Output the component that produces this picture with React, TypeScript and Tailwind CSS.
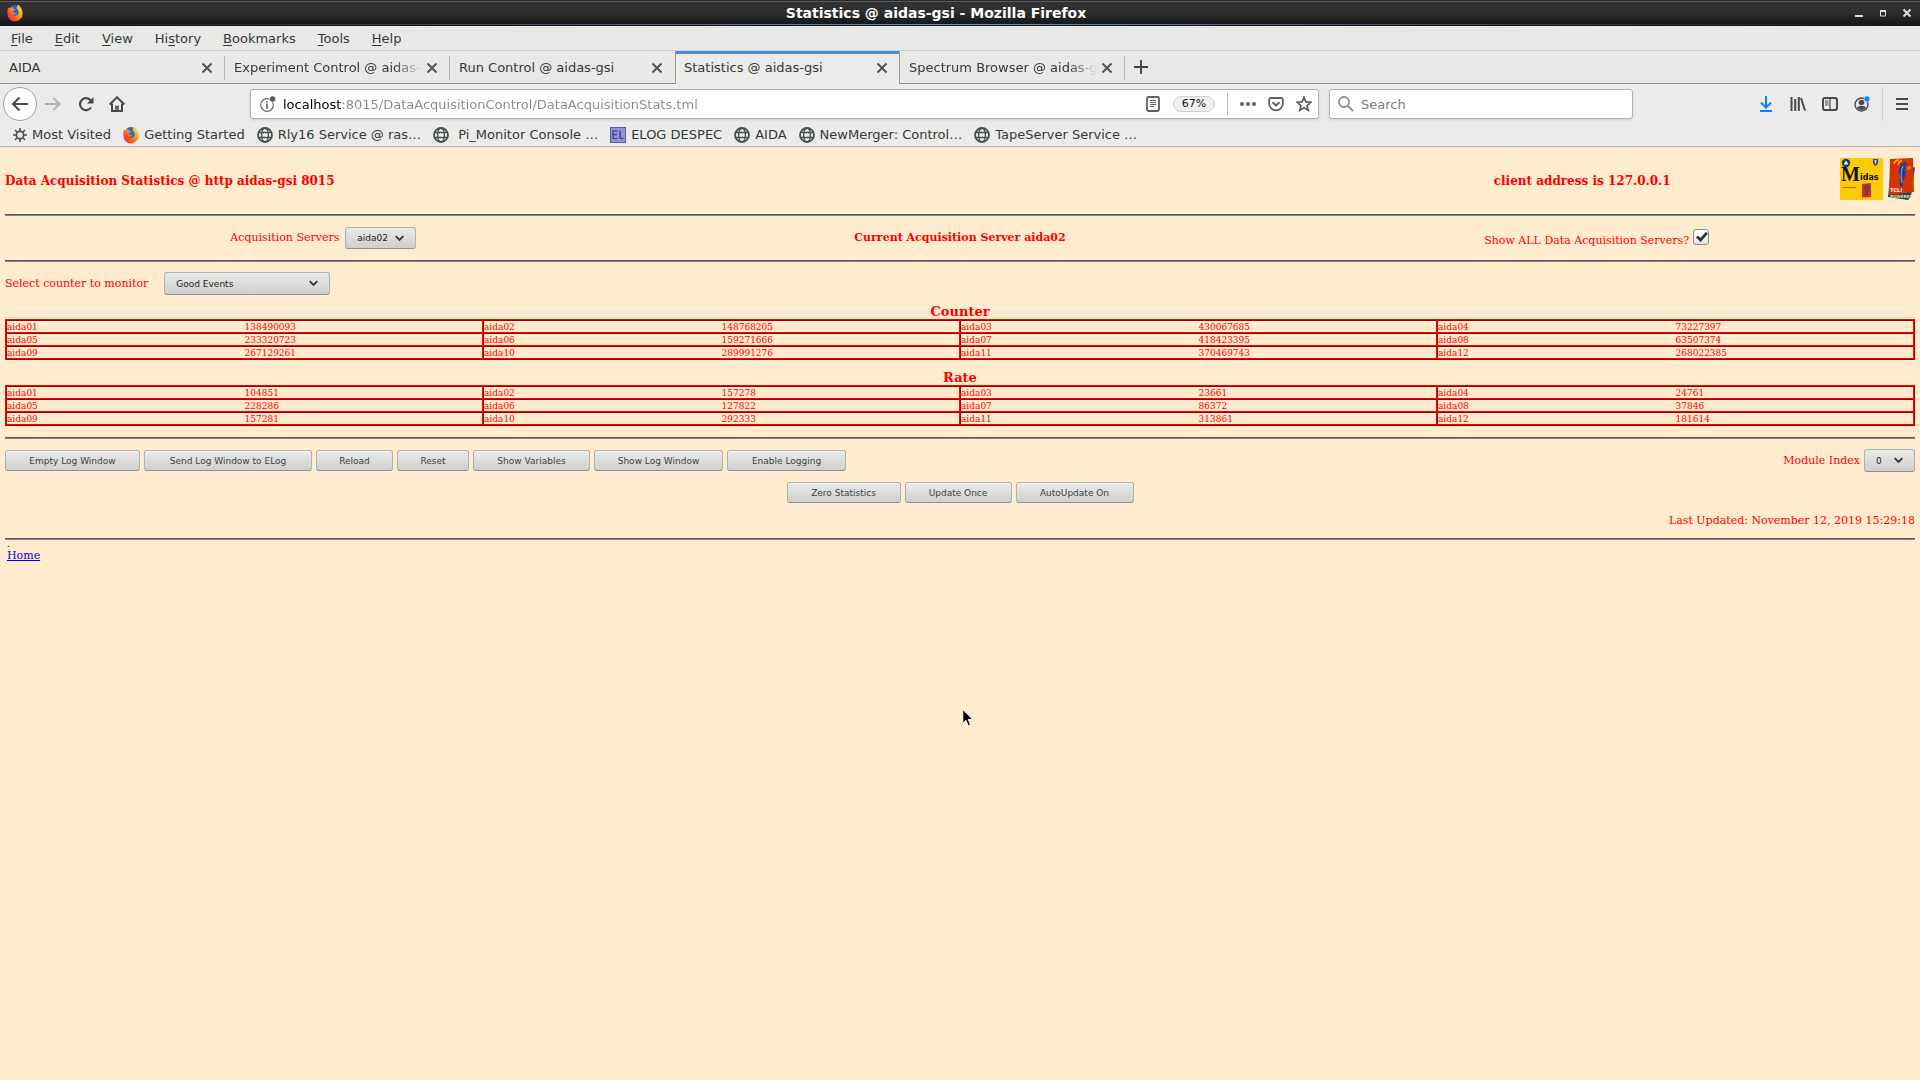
import type { ReactNode } from 'react'

const menus = [
  ['', 'F', 'ile'],
  ['', 'E', 'dit'],
  ['', 'V', 'iew'],
  ['Hi', 's', 'tory'],
  ['', 'B', 'ookmarks'],
  ['', 'T', 'ools'],
  ['', 'H', 'elp'],
]

const tabs = [
  'AIDA',
  'Experiment Control @ aidas-gsi',
  'Run Control @ aidas-gsi',
  'Statistics @ aidas-gsi',
  'Spectrum Browser @ aidas-gsi',
]
const activeTab = 3

const counters = [
  ['138490093', '148768205', '430067685', '73227397'],
  ['233320723', '159271666', '418423395', '63507374'],
  ['267129261', '289991276', '370469743', '268022385'],
]

const rates = [
  ['104851', '157278', '23661', '24761'],
  ['228286', '127822', '86372', '37846'],
  ['157281', '292333', '313861', '181614'],
]

function FirefoxIcon() {
  return (
    <svg width="16" height="18" viewBox="0 0 16 18">
      <defs>
        <linearGradient id="fox" x1="1" y1="0" x2="0" y2="1">
          <stop offset="0" stopColor="#fff04a" />
          <stop offset="0.35" stopColor="#ffb01f" />
          <stop offset="0.65" stopColor="#ff5a1f" />
          <stop offset="1" stopColor="#e01a5a" />
        </linearGradient>
      </defs>
      <circle cx="8" cy="7.5" r="6.5" fill="#1b6fc8" />
      <path
        d="M1.2 3.5 2.6 4.6C3.4 3.4 4.6 3 5.4 3.2 5.2 4.4 6.6 5 8 5.2 7.6 6.6 6 6.6 5.6 7.6 6.4 9 8 9.4 9.4 9 8.8 10.8 6.6 11 5.2 10.4 6.4 12.4 10.6 12.4 11.6 9.4 12.2 7 10.6 5 9.4 4.2 10 2.6 11.2 1 12 .6 12 2.2 15.6 4.6 15.6 9.4A7.6 8 0 0 1 8 17.4 7.6 8 0 0 1 .4 9.6C.3 7.4.5 5.2 1.2 3.5Z"
        fill="url(#fox)"
      />
    </svg>
  )
}

function GlobeIcon() {
  return (
    <svg width="16" height="16" viewBox="0 0 16 16" fill="none" stroke="#4a4f51">
      <circle cx="8" cy="8" r="7" strokeWidth="1.8" />
      <ellipse cx="8" cy="8" rx="3.4" ry="7" strokeWidth="1.3" />
      <path d="M1 5.5h14M1 10.5h14" strokeWidth="1.3" />
    </svg>
  )
}

function GearIcon() {
  return (
    <svg width="14" height="14" viewBox="0 0 14 14" fill="none" stroke="#4a4f51">
      <circle cx="7" cy="7" r="3.7" strokeWidth="1.7" />
      <path
        d="M7 0v3M7 11v3M0 7h3M11 7h3M2 2l2 2M10 10l2 2M12 2l-2 2M4 10l-2 2"
        strokeWidth="1.6"
      />
    </svg>
  )
}

function ElogIcon() {
  return (
    <svg width="16" height="16" viewBox="0 0 16 16">
      <rect width="16" height="16" fill="#5a5fa8" />
      <rect x="1" y="1" width="14" height="14" fill="#9195d6" />
      <path
        d="M7.5 4H3v7.5h4.500M3 7.700h4M10 3.500v8h3.500"
        fill="none"
        stroke="#34377f"
        strokeWidth="1.2"
      />
    </svg>
  )
}

function CloseIcon() {
  return (
    <svg width="12" height="12" viewBox="0 0 12 12" stroke="#4a4f51" strokeWidth="1.8">
      <path d="M1.5 1.5l9 9M10.5 1.5l-9 9" />
    </svg>
  )
}

const bookmarks: { label: string; icon: ReactNode }[] = [
  { label: 'Most Visited', icon: <GearIcon /> },
  { label: 'Getting Started', icon: <FirefoxIcon /> },
  { label: 'Rly16 Service @ ras…', icon: <GlobeIcon /> },
  { label: '\u00a0Pi_Monitor Console …', icon: <GlobeIcon /> },
  { label: 'ELOG DESPEC', icon: <ElogIcon /> },
  { label: 'AIDA', icon: <GlobeIcon /> },
  { label: 'NewMerger: Control…', icon: <GlobeIcon /> },
  { label: 'TapeServer Service …', icon: <GlobeIcon /> },
]

function TitleBar() {
  return (
    <header className="h-[26px] flex flex-col bg-[#141414]">
      <div className="h-px bg-[#2a2a2a]" />
      <div className="h-px bg-[#5c5c5c]" />
      <div className="flex-1 grid grid-cols-[1fr_auto_1fr] items-center bg-linear-to-b from-[#333333] via-[#2d2d2d] to-[#181818] px-[7px]">
        <FirefoxIcon />
        <h1 className="mr-12 text-sm leading-[18px] font-bold text-white">
          Statistics @ aidas-gsi - Mozilla Firefox
        </h1>
        <div className="flex justify-end gap-3">
          <button aria-label="Minimize">
            <svg width="12" height="12" viewBox="0 0 12 12" fill="#dcdcdc">
              <path d="M2 8h8v2H2z" />
            </svg>
          </button>
          <button aria-label="Maximize">
            <svg width="12" height="12" viewBox="0 0 12 12" fill="none" stroke="#dcdcdc">
              <path d="M3.5 4h5v5h-5z" />
              <path d="M3 4h6" strokeWidth="2" />
            </svg>
          </button>
          <button aria-label="Close">
            <svg width="12" height="12" viewBox="0 0 12 12" stroke="#dcdcdc" strokeWidth="2">
              <path d="M2.5 2.5l7 7M9.5 2.5l-7 7" />
            </svg>
          </button>
        </div>
      </div>
      <div className="h-px bg-linear-to-r from-[#141414] via-[#6d93c4] to-[#141414]" />
      <div className="h-px bg-[#101418]" />
    </header>
  )
}

function MenuBar() {
  return (
    <nav className="h-[25px] flex items-center border-b border-[#cfcfcd] bg-[#e8e8e6] pt-[2px]">
      {menus.map(([before, key, after]) => (
        <button key={before + key + after} className="px-[11px]">
          {before}
          <span className="underline underline-offset-2">{key}</span>
          {after}
        </button>
      ))}
    </nav>
  )
}

function TabBar() {
  return (
    <div className="h-[33px] flex bg-[#e8e8e6]">
      {tabs.map((tab, i) => (
        <div
          key={tab}
          className={
            i === activeTab
              ? 'w-[225px] flex items-center border-x border-[#9a9a98] bg-[#ebebe9] shadow-[inset_0_3px_0_#4a90d9] pl-2 pr-[11px]'
              : 'w-[225px] flex items-center border-b border-[#8e8e8c] pt-px pl-[9px]'
          }
        >
          <button
            className={
              tab.length > 25
                ? 'w-[188px] overflow-hidden whitespace-nowrap text-left mask-r-from-85% mask-r-to-100%'
                : 'w-[188px] overflow-hidden whitespace-nowrap text-left'
            }
          >
            {tab}
          </button>
          <button aria-label={`Close ${tab}`} className="ml-1">
            <CloseIcon />
          </button>
          {i !== activeTab && i !== activeTab - 1 && (
            <span className="ml-auto h-6 w-px bg-[#b4b4b2]" />
          )}
        </div>
      ))}
      <div className="flex-1 flex items-center border-b border-[#8e8e8c] pl-[9px]">
        <button aria-label="New tab">
          <svg width="14" height="14" viewBox="0 0 14 14" stroke="#3f4446" strokeWidth="1.8">
            <path d="M7 0v14M0 7h14" />
          </svg>
        </button>
      </div>
    </div>
  )
}

function NavBar() {
  return (
    <div className="h-10 flex items-center pl-[3px] pr-3">
      <button
        aria-label="Back"
        className="size-[34px] flex items-center justify-center rounded-full border border-[#a6a6a4] bg-[#fcfcfc]"
      >
        <svg width="18" height="16" viewBox="0 0 18 16" fill="none" stroke="#454a4c" strokeWidth="2">
          <path d="M17 8H2M8.5 1.5 2 8l6.5 6.5" />
        </svg>
      </button>
      <button aria-label="Forward" className="ml-2">
        <svg width="16" height="14" viewBox="0 0 16 14" fill="none" stroke="#aeb0b0" strokeWidth="2">
          <path d="M0 7h14M8.5 1 14.5 7l-6 6" />
        </svg>
      </button>
      <button aria-label="Reload" className="ml-[17px]">
        <svg width="16" height="16" viewBox="0 0 16 16" fill="none" stroke="#454a4c" strokeWidth="2.2">
          <path d="M13 11.5A6 6 0 1 1 12.6 4.2" />
          <path d="M15.5 1v6.5H9z" fill="#454a4c" stroke="none" />
        </svg>
      </button>
      <button aria-label="Home" className="ml-[15px]">
        <svg width="16" height="16" viewBox="0 0 16 16" fill="none" stroke="#454a4c" strokeWidth="2">
          <path d="M.7 8.5 8 1.3l7.3 7.2" />
          <path d="M3 7.5V15h10V7.5" />
          <path d="M7 15v-4.5h2V15" strokeWidth="1.5" />
        </svg>
      </button>

      <div className="ml-[125px] flex-1 h-[30px] flex items-center rounded-[3px] border border-[#b2b2b0] bg-white pl-[9px] pr-[6px] shadow-sm">
        <svg width="16" height="16" viewBox="0 0 16 16" fill="none" stroke="#6b6b6b">
          <circle cx="7" cy="9" r="6.3" strokeWidth="1.2" />
          <path d="M7 7.5V13M7 5v1.5" strokeWidth="1.7" />
          <circle cx="12.5" cy="3" r="3.2" fill="#5a5a5a" stroke="#fff" strokeWidth=".8" />
        </svg>
        <input
          aria-label="Address"
          className="ml-[7px] flex-1 bg-[linear-gradient(90deg,#000_59px,#8a8a8a_59px)] bg-clip-text pt-px text-transparent outline-none"
          defaultValue="localhost:8015/DataAcquisitionControl/DataAcquisitionStats.tml"
        />
        <svg width="14" height="16" viewBox="0 0 14 16" fill="none" stroke="#5f5f5f">
          <rect x="1" y="1" width="12" height="14" rx="1.5" strokeWidth="1.8" />
          <path d="M4 4.5h6M4 6.5h6M4 8.5h6M4 10.5h4" />
        </svg>
        <button className="ml-[13px] h-4 w-[42px] rounded-full border border-[#cfcfcf] bg-[#efefef] text-[11px] leading-[14px] text-[#111]">
          67%
        </button>
        <span className="ml-3 h-[22px] w-px bg-[#bdbdbd]" />
        <button aria-label="Page actions" className="ml-3">
          <svg width="16" height="4" viewBox="0 0 16 4" fill="#5f5f5f">
            <circle cx="2" cy="2" r="2" />
            <circle cx="8" cy="2" r="2" />
            <circle cx="14" cy="2" r="2" />
          </svg>
        </button>
        <button aria-label="Save to Pocket" className="ml-3">
          <svg width="16" height="16" viewBox="0 0 16 16" fill="none" stroke="#5f5f5f" strokeWidth="1.8">
            <path d="M2.5 2h11a1.3 1.3 0 0 1 1.3 1.3V7.5A6.8 6.8 0 0 1 1.2 7.5V3.3A1.3 1.3 0 0 1 2.5 2Z" />
            <path d="M4.5 6.2 8 9.5l3.5-3.3" strokeWidth="2" />
          </svg>
        </button>
        <button aria-label="Bookmark this page" className="ml-3">
          <svg width="16" height="16" viewBox="0 0 16 16" fill="none" stroke="#5f5f5f" strokeWidth="1.8">
            <path d="M8 1.5 9.9 5.9l4.8.4-3.6 3.2 1 4.8L8 11.800l-4.100 2.500 1-4.800L1.300 6.300l4.800-.4Z" />
          </svg>
        </button>
      </div>

      <div className="ml-[10px] w-[304px] h-[30px] flex items-center rounded-[3px] border border-[#b2b2b0] bg-white pl-2 shadow-sm">
        <svg width="16" height="16" viewBox="0 0 16 16" fill="none" stroke="#8f8f8f">
          <circle cx="6" cy="6" r="5" strokeWidth="1.8" />
          <path d="M9.5 9.5 15 15" strokeWidth="2" />
        </svg>
        <input
          aria-label="Search"
          placeholder="Search"
          className="ml-[7px] flex-1 pt-px outline-none placeholder:text-[#7b7b7b]"
        />
      </div>

      <div className="ml-[125px] flex items-center gap-4">
        <button aria-label="Downloads">
          <svg width="16" height="16" viewBox="0 0 16 16" fill="none" stroke="#0a84ff" strokeWidth="2">
            <path d="M8 0v11M3 6.5l5 5 5-5M2 15h12" />
          </svg>
        </button>
        <button aria-label="Library">
          <svg width="16" height="16" viewBox="0 0 16 16" fill="none" stroke="#454a4c" strokeWidth="2">
            <path d="M1.5 1v14M5.2 3v12M8.8 1v14M11 2l4 12.5" />
          </svg>
        </button>
        <button aria-label="Sidebars">
          <svg width="16" height="16" viewBox="0 0 16 16" fill="none" stroke="#454a4c">
            <rect x="1" y="2" width="14" height="12" rx="2" strokeWidth="2" />
            <path d="M8 2v12M3 5h3.5M3 7h3.5M3 9h3.5" strokeWidth="1.2" />
          </svg>
        </button>
        <button aria-label="Account">
          <svg width="16" height="16" viewBox="0 0 16 16">
            <circle cx="7.5" cy="8.5" r="6.5" fill="none" stroke="#454a4c" strokeWidth="1.4" />
            <circle cx="7.5" cy="6.5" r="2.8" fill="#454a4c" />
            <path d="M3 12c1-2 2.500-2 4.500-2s3.500 0 4.500 2c-2.500 2.500-6.500 2.500-9 0Z" fill="#454a4c" />
            <circle cx="13" cy="3" r="3" fill="#0a84ff" stroke="#ebebe9" strokeWidth=".6" />
          </svg>
        </button>
      </div>
      <span className="ml-3 h-[34px] w-px bg-[#d0d0ce]" />
      <button aria-label="Open menu" className="ml-[13px]">
        <svg width="12" height="14" viewBox="0 0 12 14" stroke="#454a4c" strokeWidth="2">
          <path d="M0 2h12M0 7h12M0 12h12" />
        </svg>
      </button>
    </div>
  )
}

function BookmarksBar() {
  return (
    <div className="h-[23px] flex items-center gap-3 border-b border-[#b4b4b2] pl-[13px]">
      {bookmarks.map((b) => (
        <a key={b.label} href="#" className="flex items-center gap-[5px] whitespace-nowrap">
          {b.icon}
          {b.label}
        </a>
      ))}
    </div>
  )
}

function Rule() {
  return <hr className="h-[2px] border-0 border-t border-[#555555] bg-[#85858a]" />
}

type SelectProps = {
  id: string
  className: string
  options: string[]
}

function Select({ id, className, options }: SelectProps) {
  return (
    <span className={`relative inline-block ${className}`}>
      <select
        id={id}
        className="block h-full w-full appearance-none rounded-[3px] border border-[#b0b0ae] border-b-[#8e8e8c] bg-linear-to-b from-[#e9e9e8] to-[#cfcfcd] pl-[11px] font-[DejaVu_Sans,sans-serif] text-[9px] text-[#222]"
      >
        {options.map((o) => (
          <option key={o}>{o}</option>
        ))}
      </select>
      <svg
        className="pointer-events-none absolute right-3 top-2"
        width="9"
        height="7"
        viewBox="0 0 9 7"
        fill="none"
        stroke="#333"
        strokeWidth="1.8"
      >
        <path d="M.7 1.2 4.5 5 8.3 1.2" />
      </svg>
    </span>
  )
}

function Button({ className, children }: { className: string; children: ReactNode }) {
  return (
    <button
      className={`h-[21px] rounded-[3px] border border-[#b0b0ae] border-b-[#8e8e8c] bg-linear-to-b from-[#ebebea] to-[#cfcfcd] font-[DejaVu_Sans,sans-serif] text-[9px] text-[#3c4143] shadow-[inset_0_1px_0_#f8f8f8] ${className}`}
    >
      {children}
    </button>
  )
}

function StatsTable({ title, rows }: { title: string; rows: string[][] }) {
  return (
    <section>
      <h2 className="text-center text-[13px] leading-[15px] font-bold">{title}</h2>
      <table
        aria-label={title}
        className="w-full table-fixed border-separate border-spacing-0 border border-[#ff0000] border-r-[#b00000] border-b-[#990000] text-[9px] leading-[10px]"
      >
        <tbody>
          {rows.map((row, r) => (
            <tr key={r}>
              {row.map((value, c) => [
                <td
                  key={`n${c}`}
                  className="border-y border-l border-t-[#990000] border-b-[#ff0000] border-l-[#b00000] p-0 pt-px"
                >
                  aida{String(r * 4 + c + 1).padStart(2, '0')}
                </td>,
                <td
                  key={`v${c}`}
                  className="border-y border-r border-t-[#990000] border-b-[#ff0000] border-r-[#ff0000] p-0 pt-px"
                >
                  {value}
                </td>,
              ])}
            </tr>
          ))}
        </tbody>
      </table>
    </section>
  )
}

function Logos() {
  return (
    <div className="flex gap-1">
      <svg width="44" height="42" viewBox="0 0 44 42">
        <rect width="43" height="42" fill="#fccb05" />
        <circle cx="6" cy="5" r="4.2" fill="#123a70" />
        <path d="M3.5 6.5 6 2.5l2.5 4z" fill="#fff" />
        <path d="M33 1h5v4q-1 3-2.5 3T33 5z" fill="#28539b" />
        <path d="M34 3h3M35.5 2v4" stroke="#dfe7f5" strokeWidth=".8" />
        <text x="1" y="23" fontFamily="Liberation Serif, serif" fontWeight="bold" fontSize="20" fill="#111">
          M
        </text>
        <text x="20" y="22" fontFamily="DejaVu Sans, sans-serif" fontWeight="bold" fontSize="8" fill="#111">
          idas
        </text>
        <text x="3" y="30" fontFamily="DejaVu Sans, sans-serif" fontWeight="bold" fontSize="2" fill="#333">
          powered by
        </text>
        <path d="M22 26l9-1v14l-9 .5z" fill="#d33208" />
        <path d="M27 27q-3 3-1 6t-1 4M28 27q1 5-1 8" stroke="#28449b" strokeWidth="1.3" fill="none" />
      </svg>
      <svg width="27" height="42" viewBox="0 0 27 42">
        <path d="M2 20 0 39l20 3 3-4 4-29z" fill="#123e9c" />
        <path d="M2 1 25 0l1 34L1 37z" fill="#d23504" />
        <path d="M6 6q1-4 5-4M10 7q1-4 4-4" stroke="#f5b90c" strokeWidth="1.3" fill="none" />
        <path d="M17 4q-5 1-6 8-1 4 2 7-3 5 0 10l2-1q-1-4 1-8 3-4 1-8 1-4 2-7z" fill="#1c3f9f" />
        <path d="M15 8q-3 6-1 17" stroke="#a7b7df" strokeWidth=".8" fill="none" />
        <path d="M20 12v-3M22 11V8" stroke="#f5b90c" />
        <text x="2" y="34" fontFamily="DejaVu Sans, sans-serif" fontSize="5" fill="#fff">
          TCL!
        </text>
        <text x="2" y="40" fontFamily="DejaVu Sans, sans-serif" fontWeight="bold" fontSize="4" fill="#ffe600">
          POWERED
        </text>
      </svg>
    </div>
  )
}

function StatsPage() {
  return (
    <main className="px-[5px] font-[DejaVu_Serif,serif] text-[11px] leading-[14px] text-[#ff0000]">
      <div className="h-[67px] flex items-center text-xs font-bold">
        <h1 className="flex-1">Data Acquisition Statistics @ http aidas-gsi 8015</h1>
        <p className="w-[27%] text-center">client address is 127.0.0.1</p>
        <div className="self-start pt-[11px]">
          <Logos />
        </div>
      </div>
      <Rule />

      <div className="h-11 grid grid-cols-3 items-center">
        <div className="flex items-center justify-center gap-[6px]">
          <label htmlFor="server">Acquisition Servers</label>
          <Select id="server" className="w-[71px] h-[22px]" options={['aida02']} />
        </div>
        <p className="text-center font-bold">Current Acquisition Server aida02</p>
        <div className="flex items-end justify-center gap-1">
          <label htmlFor="show-all">Show ALL Data Acquisition Servers?</label>
          <span className="relative mb-[3px]">
            <input
              id="show-all"
              type="checkbox"
              defaultChecked
              className="block size-4 appearance-none rounded-[3px] border border-[#8e9092] bg-linear-to-b from-white to-[#e4e4e4]"
            />
            <svg
              className="pointer-events-none absolute left-[3px] top-[3px]"
              width="12"
              height="10"
              viewBox="0 0 12 10"
              fill="none"
              stroke="#2e3436"
              strokeWidth="2.8"
            >
              <path d="M1 4.5 4.5 8 11 .8" />
            </svg>
          </span>
        </div>
      </div>
      <Rule />

      <div className="flex items-center gap-4 pt-[10px] pb-[9px]">
        <label htmlFor="counter">Select counter to monitor</label>
        <Select id="counter" className="w-[166px] h-[23px]" options={['Good Events']} />
      </div>

      <div className="flex flex-col gap-[10px] pb-[11px]">
        <StatsTable title="Counter" rows={counters} />
        <StatsTable title="Rate" rows={rates} />
      </div>
      <Rule />

      <div className="flex items-center gap-1 pt-[10px]">
        <Button className="w-[135px]">Empty Log Window</Button>
        <Button className="w-[168px]">Send Log Window to ELog</Button>
        <Button className="w-[77px]">Reload</Button>
        <Button className="w-[72px]">Reset</Button>
        <Button className="w-[117px]">Show Variables</Button>
        <Button className="w-[129px]">Show Log Window</Button>
        <Button className="w-[119px]">Enable Logging</Button>
        <label htmlFor="module" className="ml-auto">
          Module Index
        </label>
        <Select id="module" className="w-[51px] h-[23px]" options={['0']} />
      </div>

      <div className="flex justify-center gap-1 pt-[10px]">
        <Button className="w-[114px]">Zero Statistics</Button>
        <Button className="w-[107px]">Update Once</Button>
        <Button className="w-[118px]">AutoUpdate On</Button>
      </div>

      <p className="pt-[11px] pb-[10px] text-right">Last Updated: November 12, 2019 15:29:18</p>
      <Rule />

      <div className="pl-[2px]">
        <p className="h-[9px] text-[9px] leading-[8px] text-black">.</p>
        <a href="#" className="text-[#0000ee] underline">
          Home
        </a>
      </div>
    </main>
  )
}

export default function App() {
  return (
    <div className="min-h-screen bg-[#ffebcd]">
      <div className="bg-[#ebebe9] font-[DejaVu_Sans,sans-serif] text-[13px] leading-4 text-[#33393b]">
        <TitleBar />
        <MenuBar />
        <TabBar />
        <NavBar />
        <BookmarksBar />
      </div>
      <StatsPage />
      {/* Mouse pointer */}
      <svg className="absolute left-[962px] top-[708px]" width="12" height="20" viewBox="0 0 12 20">
        <path
          d="M.8 1.5v13.8l3.2-3 2.2 5.5 2.3-1L6.3 11.5h4.5Z"
          fill="#000"
          stroke="#fff"
          strokeWidth=".9"
        />
      </svg>
    </div>
  )
}
